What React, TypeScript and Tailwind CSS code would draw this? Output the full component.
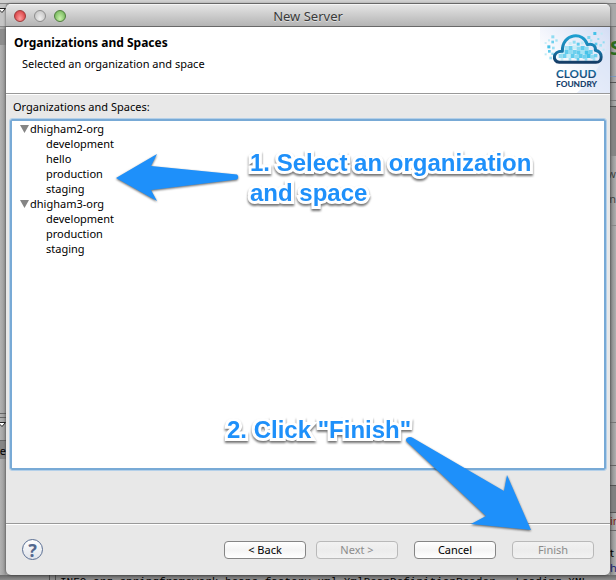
import { useState } from "react";

type Org = { name: string; spaces: string[] };

const orgs: Org[] = [
  { name: "dhigham2-org", spaces: ["development", "hello", "production", "staging"] },
  { name: "dhigham3-org", spaces: ["development", "production", "staging"] },
];

const pixels: [number, number, number, string][] = [
  [34, 22, 9, "#8fdcf2"], [24, 34, 6, "#bfeaf7"], [34, 38, 8, "#6fd0ee"], [14, 42, 6, "#c8eef8"],
  [46, 34, 7, "#a5e3f5"], [22, 52, 9, "#46c2e8"], [36, 56, 8, "#9be0f4"], [24, 66, 8, "#5fcbec"],
  [14, 76, 6, "#bfeaf7"], [34, 74, 7, "#8fdcf2"], [28, 86, 8, "#a5e3f5"], [142, 24, 9, "#7fd6f0"],
  [150, 34, 7, "#a5e3f5"], [160, 12, 9, "#46c2e8"], [172, 30, 6, "#8fdcf2"], [182, 14, 6, "#bfeaf7"],
  [164, 44, 8, "#5fcbec"], [178, 48, 8, "#a5e3f5"], [188, 40, 6, "#8fdcf2"], [188, 62, 6, "#bfeaf7"],
  [86, 42, 9, "#c8eef8"], [98, 38, 9, "#8fdcf2"], [110, 44, 9, "#5fcbec"], [122, 40, 9, "#bfeaf7"],
  [74, 54, 12, "#a5e3f5"], [86, 54, 12, "#6fd0ee"], [98, 52, 12, "#c8eef8"], [110, 56, 12, "#8fdcf2"],
  [122, 54, 12, "#5fcbec"], [134, 56, 12, "#8fdcf2"], [62, 66, 12, "#c8eef8"], [74, 66, 12, "#5fcbec"],
  [86, 66, 12, "#8fdcf2"], [98, 66, 12, "#6fd0ee"], [110, 68, 12, "#5fcbec"], [122, 66, 12, "#a5e3f5"],
  [134, 68, 12, "#46c2e8"], [146, 66, 12, "#6fd0ee"], [56, 78, 12, "#8fdcf2"], [68, 78, 12, "#6fd0ee"],
  [80, 78, 12, "#c8eef8"], [92, 78, 12, "#5fcbec"], [104, 80, 12, "#8fdcf2"], [116, 78, 12, "#5fcbec"],
  [128, 80, 12, "#6fd0ee"], [140, 78, 12, "#46c2e8"], [152, 80, 12, "#8fdcf2"], [162, 78, 10, "#6fd0ee"],
  [62, 90, 8, "#c8eef8"], [86, 90, 8, "#a5e3f5"], [110, 90, 8, "#5fcbec"], [134, 90, 8, "#8fdcf2"],
  [158, 90, 8, "#a5e3f5"],
];

function CloudFoundryLogo() {
  return (
    <svg viewBox="0 0 210 198" className="h-[66px] w-[70px] shrink-0" role="img" aria-label="Cloud Foundry">
      <defs>
        <linearGradient id="sky" x1="0" y1="1" x2="1" y2="0">
          <stop offset="0.3" stopColor="#ffffff" />
          <stop offset="1" stopColor="#d3ddf4" />
        </linearGradient>
        <linearGradient id="rim" x1="0" y1="0" x2="0" y2="1">
          <stop offset="0" stopColor="#1f9fd0" />
          <stop offset="0.6" stopColor="#1673a5" />
          <stop offset="1" stopColor="#143c66" />
        </linearGradient>
        <linearGradient id="word" x1="0" y1="0" x2="0" y2="1">
          <stop offset="0" stopColor="#1786bb" />
          <stop offset="1" stopColor="#163f6b" />
        </linearGradient>
      </defs>
      <rect width="210" height="198" fill="url(#sky)" />
      <path d="M110 198 Q190 130 210 20 V198 Z" fill="#d9e2f6" opacity="0.6" />
      <g transform="translate(0 3)">
        {pixels.map(([x, y, s, c]) => (
          <rect key={`${x}-${y}`} x={x} y={y} width={s} height={s} fill={c} />
        ))}
        <path
          d="M58 103 C36 101 38 68 67 70 C66 14 132 10 142 50 C160 44 168 57 166 67 C190 72 188 103 168 103 Z"
          fill="none"
          stroke="url(#rim)"
          strokeWidth="9"
          strokeLinejoin="round"
        />
        <text x="48" y="149" fontSize="35" fontWeight="700" fontFamily="Lato, sans-serif" fill="url(#word)">CLOUD</text>
        <text x="48" y="178" fontSize="25" fontWeight="900" fontFamily="Lato, sans-serif" fill="#17416d">FOUNDRY</text>
      </g>
    </svg>
  );
}

function MenuArrow() {
  return (
    <svg className="-ml-[2px] h-[6px] w-[8px]" viewBox="0 0 8 6">
      <path d="M0 .5h7.500L4 4.500z" fill="#fff" stroke="#222" />
    </svg>
  );
}

/* The editor window that shows around the edges of the dialog. */
function Backdrop() {
  return (
    <div aria-hidden="true" className="absolute inset-0 flex flex-col bg-[#a9a9a9] font-['Noto_Sans',sans-serif] text-[11px] leading-[15px]">
      <div className="h-[4px] shrink-0 border-b border-[#858585] bg-[#d0d0d0]" />
      <div className="flex min-h-0 flex-1 justify-between overflow-hidden">
        <div className="flex w-[6px] flex-col overflow-hidden bg-linear-to-r from-[#b2b2b2] to-[#979797]">
          <div className="h-[23px] shrink-0 border-b border-[#888] bg-[#c4c4c4] pt-[4px]">
            <MenuArrow />
          </div>
          <div className="mt-[2px] h-[16px] shrink-0 bg-[#8d8d8d]" />
          <div className="mt-[368px] h-[5px] shrink-0 border-y border-[#666]" />
          <div className="h-[22px] shrink-0 pt-[4px]">
            <MenuArrow />
          </div>
          <div className="flex h-[19px] shrink-0 items-center justify-end border-t border-[#666] bg-[#858585] text-black">ze</div>
        </div>
        <div className="flex w-[6px] flex-col overflow-hidden bg-linear-to-r from-[#858585] to-[#b0b0b0]">
          <div className="h-[23px] shrink-0 border-b border-[#777] bg-[#a9a9a9]" />
          <div className="h-[50px] shrink-0 border-b border-[#7c97bd] pt-[8px] text-[20px] leading-[26px] font-bold text-[#2c6b1c]">S</div>
          <div className="h-[6px] shrink-0 border-b border-[#555]" />
          <div className="h-[18px] shrink-0 border-b border-[#777]" />
          <div className="mt-[5px] h-[50px] shrink-0 border-t border-[#555] bg-[#858585]" />
          <div className="flex h-[70px] shrink-0 flex-col items-end gap-[10px] border-b border-[#888] pt-[10px] text-[#444]">
            <span>lw</span>
            <span>an</span>
          </div>
          <div className="h-[197px] shrink-0 border-b border-[#777]" />
          <div className="h-[43px] shrink-0 border-b border-[#666]" />
          <div className="mt-[19px] h-[28px] shrink-0 border-y border-[#555] bg-[#808080]" />
          <div className="h-[18px] shrink-0 border-b border-[#666] text-[#7a2416]">in</div>
          <div className="pt-[14px] text-black">t</div>
          <div className="text-[#1b2470]">h</div>
        </div>
      </div>
      <div className="flex h-[5px] shrink-0 overflow-hidden bg-linear-to-b from-[#686868] to-[#8d8d8d] pl-[49px]">
        <div className="h-full w-[7px] shrink-0 border-x border-[#4a4a4a]" />
        <p className="pt-px pl-[4px] font-['Liberation_Mono',monospace] leading-[13px] whitespace-pre text-black">
          INFO org.springframework.beans.factory.xml.XmlBeanDefinitionReader - Loading XML
        </p>
      </div>
    </div>
  );
}

function PushButton({ children, disabled = false }: { children: string; disabled?: boolean }) {
  return (
    <button
      type="button"
      disabled={disabled}
      className="h-[18px] w-[82px] rounded-[4px] border border-[#858585] bg-linear-to-b from-white via-[#f4f4f4] to-white text-[11px] leading-[15px] text-black disabled:border-[#b9b9b9] disabled:from-[#f2f2f2] disabled:via-[#ececec] disabled:to-[#f2f2f2] disabled:text-[#8c8c8c]"
    >
      {children}
    </button>
  );
}

function OrgNode({ org }: { org: Org }) {
  const [open, setOpen] = useState(true);
  return (
    <li role="treeitem" aria-expanded={open}>
      <button type="button" onClick={() => setOpen(!open)} className="flex h-[15px] items-center gap-px">
        <svg viewBox="0 0 9 8" className={open ? "h-[8px] w-[9px]" : "h-[8px] w-[9px] -rotate-90"}>
          <path d="M0 0h9L4.500 8z" fill="#858585" />
        </svg>
        {org.name}
      </button>
      {open && (
        <ul role="group" className="pl-[26px]">
          {org.spaces.map((space) => (
            <li key={space} role="treeitem" className="h-[15px]">{space}</li>
          ))}
        </ul>
      )}
    </li>
  );
}

const callout =
  "absolute font-['Liberation_Sans',Arial,sans-serif] text-[24px] leading-[30px] font-bold text-[#1e90fa] [-webkit-text-stroke:6px_white] [paint-order:stroke_fill] [stroke-linejoin:round] drop-shadow-[0_2px_1px_rgba(0,0,0,0.55)]";

function Annotations() {
  return (
    <div className="pointer-events-none absolute inset-0">
      <p className={`${callout} top-[148px] left-[250px] w-[300px]`}>1. Select an organization and space</p>
      <p className={`${callout} top-[415px] left-[227px] whitespace-nowrap`}>2. Click "Finish"</p>
      <svg viewBox="0 0 616 580" className="absolute top-0 left-0 h-[580px] w-[616px] drop-shadow-[0_1px_1px_rgba(0,0,0,0.6)]">
        <path d="M116 178 L157 154 L151 166 L237 174.500 Q239.500 177 237 179.500 L151 190 L157 201 Z" fill="#1e90fa" />
        <path d="M407 438 Q410 436 413 438 L504 491 L507 475 L531 530 L471 524 L486 516 L407 442 Q405 440 407 438 Z" fill="#1e90fa" />
      </svg>
    </div>
  );
}

export default function App() {
  return (
    <div className="relative flex h-screen min-h-[400px] flex-col px-[6px] pt-[4px] pb-[5px] font-['Noto_Sans',sans-serif] text-[11px] leading-[15px] text-black">
      <Backdrop />
      <main className="relative flex flex-1 flex-col overflow-hidden rounded-[5px] bg-[#e8e8e8] shadow-[0_0_3px_rgba(0,0,0,0.6)]">
        <header className="grid h-[23px] grid-cols-[1fr_auto_1fr] items-center border-t border-b border-t-[#f5f5f5] border-b-[#686868] bg-linear-to-b from-[#e4e4e4] to-[#b4b4b4] px-2">
          <div className="flex gap-2">
            <button type="button" aria-label="Close" className="size-3 rounded-full border border-[#9c3a3a] bg-radial-[at_50%_75%] from-[#ff9d9d] to-[#cf2c30]" />
            <button type="button" aria-label="Minimize" className="size-3 rounded-full border border-[#8d8d8d] bg-radial-[at_50%_75%] from-[#f0f0f0] to-[#bcbcbc]" />
            <button type="button" aria-label="Zoom" className="size-3 rounded-full border border-[#4f7d3d] bg-radial-[at_50%_75%] from-[#c9f2ab] to-[#64ab4b]" />
          </div>
          <h1 className="text-[13px] leading-[18px] text-[#3a3a3a] [text-shadow:0_1px_0_rgba(255,255,255,0.5)]">New Server</h1>
        </header>

        <section className="flex h-[67px] justify-between border-b border-[#999] bg-white">
          <div className="px-2 pt-[8px]">
            <h2 className="text-[12px] leading-[16px] font-bold">Organizations and Spaces</h2>
            <p className="pt-[5px] pl-[8px]">Selected an organization and space</p>
          </div>
          <CloudFoundryLogo />
        </section>

        <section className="flex flex-1 flex-col border-t border-white px-[4px] pt-[4px] pb-[53px]">
          <h3 id="tree-label" className="pb-[5px] pl-[3px]">Organizations and Spaces:</h3>
          <ul
            role="tree"
            aria-labelledby="tree-label"
            className="flex-1 rounded-[2px] border-2 border-[#78aad6] bg-white pl-[8px] outline-1 outline-[#b4d0e9]"
          >
            {orgs.map((org) => (
              <OrgNode key={org.name} org={org} />
            ))}
          </ul>
        </section>

        <footer className="flex h-[52px] items-center border-t border-[#999] px-[16px] shadow-[inset_0_1px_0_#fff]">
          <button
            type="button"
            aria-label="Help"
            className="size-[21px] rounded-full border border-[#5b6f93] bg-linear-to-b from-white to-[#dfe3ea] text-[18px] leading-[18px] font-bold text-[#54698f]"
          >
            ?
          </button>
          <div className="ml-auto flex gap-4">
            <div className="flex gap-[10px]">
              <PushButton>{"< Back"}</PushButton>
              <PushButton disabled>{"Next >"}</PushButton>
            </div>
            <PushButton>Cancel</PushButton>
            <PushButton disabled>Finish</PushButton>
          </div>
        </footer>
      </main>
      <Annotations />
    </div>
  );
}
